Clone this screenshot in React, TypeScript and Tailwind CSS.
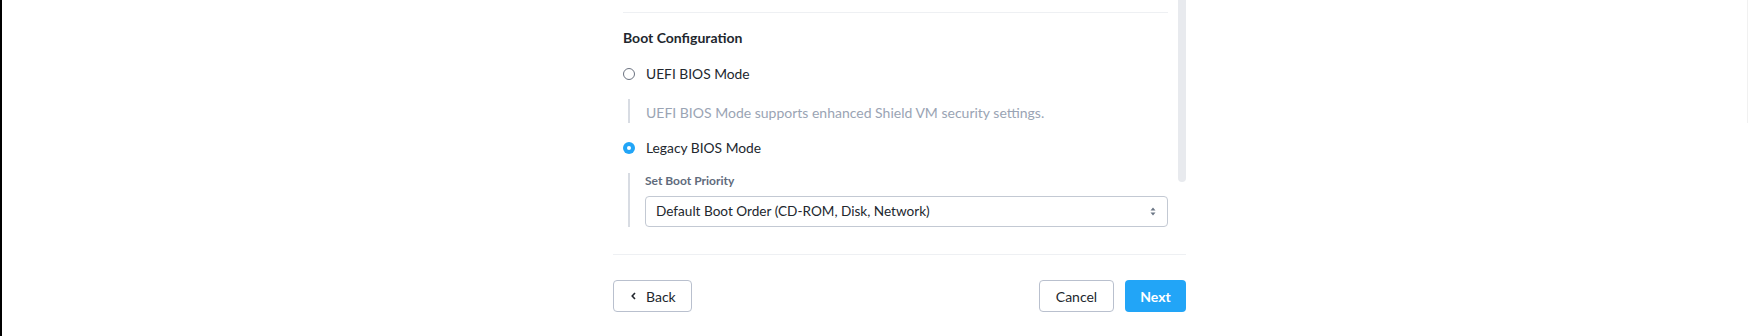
const font = { fontFamily: 'Lato, "Liberation Sans", sans-serif' }

function Radio({ checked }: { checked?: boolean }) {
  return checked ? (
    <span className="flex h-[12px] w-[12px] shrink-0 items-center justify-center rounded-full bg-[#22a5f7]">
      <span className="h-[4px] w-[4px] rounded-full bg-white" />
    </span>
  ) : (
    <span className="h-[12px] w-[12px] shrink-0 rounded-full border border-[#6b7280] bg-white" />
  )
}

export default function App() {
  return (
    <div
      className="relative h-[336px] w-[1748px] overflow-hidden border-l-2 border-black bg-white text-[14px] text-[#22272e]"
      style={font}
    >
      {/* page scrollbar hint */}
      <div className="absolute right-0 top-0 h-[123px] w-px bg-[#f1f1f1]" />

      <div className="ml-[611px] w-[573px]">
        {/* Scrollable body */}
        <div className="relative h-[254px]">
          <div className="absolute right-0 top-0 h-[182px] w-[8px] rounded-b-full bg-[#e8eaee]" />

          <div className="pl-[10px] pr-[18px] pt-[12px]">
            <div className="border-t border-[#eef0f3]" />

            <h3 className="mt-[15px] h-[20px] font-bold leading-[20px]">Boot Configuration</h3>

            <label className="mt-[16px] flex h-[20px] items-center gap-[11px] text-[13.8px] leading-[20px]">
              <Radio />
              <span>UEFI BIOS Mode</span>
            </label>

            <div className="ml-[5px] mt-[15px] h-[24px] border-l-2 border-[#d8dce3] pl-[16px] pt-[4px] leading-[20px] text-[#9aa4b4]">
              UEFI BIOS Mode supports enhanced Shield VM security settings.
            </div>

            <label className="mt-[15px] flex h-[20px] items-center gap-[11px] text-[13.8px] leading-[20px]">
              <Radio checked />
              <span>Legacy BIOS Mode</span>
            </label>

            <div className="ml-[5px] mt-[15px] border-l-2 border-[#d8dce3] pl-[15px]">
              <div className="h-[16px] text-[12px] font-bold leading-[16px] text-[#5f6b7c]">
                Set Boot Priority
              </div>
              <div className="mt-[7px] flex h-[31px] items-center justify-between rounded-[4px] border border-[#c3c9d3] pl-[10px] pr-[11px]">
                <span className="text-[13.6px]">Default Boot Order (CD-ROM, Disk, Network)</span>
                <svg width="6" height="9" viewBox="0 0 6 9" className="text-[#6b7685]">
                  <path d="M3 0.5 L5.5 3.5 H0.5 Z M3 8.5 L5.5 5.5 H0.5 Z" fill="currentColor" />
                </svg>
              </div>
            </div>
          </div>
        </div>

        {/* Footer */}
        <div className="flex justify-between border-t border-[#eef0f3] pt-[25px]">
          <button className="flex h-[32px] w-[79px] items-center gap-[10px] rounded-[4px] border border-[#b9c0ce] bg-white pl-[17px] text-[14px] text-[#22272e]">
            <svg width="5" height="8" viewBox="0 0 5 8">
              <path d="M4 1 L1.2 4 L4 7" fill="none" stroke="#22272e" strokeWidth="1.6" />
            </svg>
            Back
          </button>
          <div className="flex gap-[11px]">
            <button className="h-[32px] w-[75px] rounded-[4px] border border-[#b9c0ce] bg-white text-[14px] text-[#22272e]">
              Cancel
            </button>
            <button className="h-[32px] w-[61px] rounded-[4px] bg-[#22a5f7] text-[14px] font-bold text-white">
              Next
            </button>
          </div>
        </div>
      </div>
    </div>
  )
}
